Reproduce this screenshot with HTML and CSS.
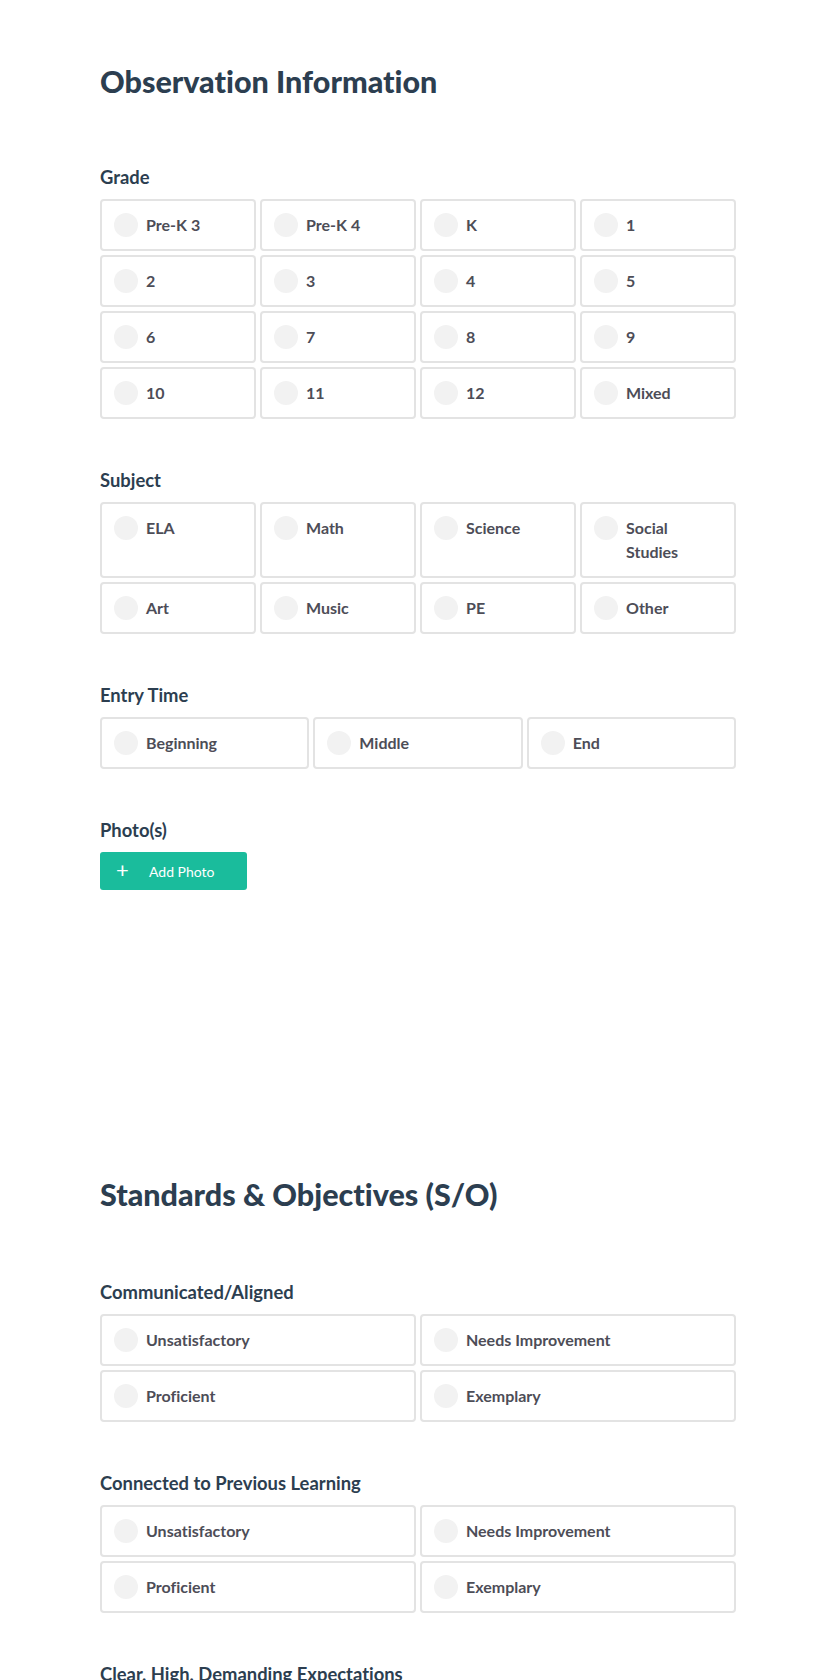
FILE: index.html
```html
<!DOCTYPE html>
<html>
<head>
<meta charset="utf-8">
<link rel="stylesheet" href="styles.css">
</head>
<body>
<main class="page">
  <section class="section">
    <h1 class="section-title">Observation Information</h1>

    <div class="field">
      <h2 class="field-label">Grade</h2>
      <div class="options cols-4">
        <label class="option"><span class="radio"></span><span class="option-text">Pre-K 3</span></label>
        <label class="option"><span class="radio"></span><span class="option-text">Pre-K 4</span></label>
        <label class="option"><span class="radio"></span><span class="option-text">K</span></label>
        <label class="option"><span class="radio"></span><span class="option-text">1</span></label>
        <label class="option"><span class="radio"></span><span class="option-text">2</span></label>
        <label class="option"><span class="radio"></span><span class="option-text">3</span></label>
        <label class="option"><span class="radio"></span><span class="option-text">4</span></label>
        <label class="option"><span class="radio"></span><span class="option-text">5</span></label>
        <label class="option"><span class="radio"></span><span class="option-text">6</span></label>
        <label class="option"><span class="radio"></span><span class="option-text">7</span></label>
        <label class="option"><span class="radio"></span><span class="option-text">8</span></label>
        <label class="option"><span class="radio"></span><span class="option-text">9</span></label>
        <label class="option"><span class="radio"></span><span class="option-text">10</span></label>
        <label class="option"><span class="radio"></span><span class="option-text">11</span></label>
        <label class="option"><span class="radio"></span><span class="option-text">12</span></label>
        <label class="option"><span class="radio"></span><span class="option-text">Mixed</span></label>
      </div>
    </div>

    <div class="field">
      <h2 class="field-label">Subject</h2>
      <div class="options cols-4">
        <label class="option"><span class="radio"></span><span class="option-text">ELA</span></label>
        <label class="option"><span class="radio"></span><span class="option-text">Math</span></label>
        <label class="option"><span class="radio"></span><span class="option-text">Science</span></label>
        <label class="option"><span class="radio"></span><span class="option-text">Social Studies</span></label>
        <label class="option"><span class="radio"></span><span class="option-text">Art</span></label>
        <label class="option"><span class="radio"></span><span class="option-text">Music</span></label>
        <label class="option"><span class="radio"></span><span class="option-text">PE</span></label>
        <label class="option"><span class="radio"></span><span class="option-text">Other</span></label>
      </div>
    </div>

    <div class="field">
      <h2 class="field-label">Entry Time</h2>
      <div class="options cols-3">
        <label class="option"><span class="radio"></span><span class="option-text">Beginning</span></label>
        <label class="option"><span class="radio"></span><span class="option-text">Middle</span></label>
        <label class="option"><span class="radio"></span><span class="option-text">End</span></label>
      </div>
    </div>

    <div class="field">
      <h2 class="field-label">Photo(s)</h2>
      <button class="add-btn" type="button"><span class="plus">+</span><span>Add Photo</span></button>
    </div>
  </section>

  <section class="section">
    <h1 class="section-title section-title-lg-gap">Standards &amp; Objectives (S/O)</h1>

    <div class="field">
      <h2 class="field-label">Communicated/Aligned</h2>
      <div class="options cols-2">
        <label class="option"><span class="radio"></span><span class="option-text">Unsatisfactory</span></label>
        <label class="option"><span class="radio"></span><span class="option-text">Needs Improvement</span></label>
        <label class="option"><span class="radio"></span><span class="option-text">Proficient</span></label>
        <label class="option"><span class="radio"></span><span class="option-text">Exemplary</span></label>
      </div>
    </div>

    <div class="field">
      <h2 class="field-label">Connected to Previous Learning</h2>
      <div class="options cols-2">
        <label class="option"><span class="radio"></span><span class="option-text">Unsatisfactory</span></label>
        <label class="option"><span class="radio"></span><span class="option-text">Needs Improvement</span></label>
        <label class="option"><span class="radio"></span><span class="option-text">Proficient</span></label>
        <label class="option"><span class="radio"></span><span class="option-text">Exemplary</span></label>
      </div>
    </div>

    <div class="field">
      <h2 class="field-label">Clear, High, Demanding Expectations</h2>
      <div class="options cols-2">
        <label class="option"><span class="radio"></span><span class="option-text">Unsatisfactory</span></label>
        <label class="option"><span class="radio"></span><span class="option-text">Needs Improvement</span></label>
        <label class="option"><span class="radio"></span><span class="option-text">Proficient</span></label>
        <label class="option"><span class="radio"></span><span class="option-text">Exemplary</span></label>
      </div>
    </div>
  </section>
</main>
</body>
</html>
```

FILE: styles.css
```css
* { box-sizing: border-box; }

html, body {
  margin: 0;
  padding: 0;
  background: #ffffff;
}

body {
  font-family: Lato, "Open Sans", "Liberation Sans", sans-serif;
  font-variant-ligatures: none;
  font-feature-settings: "liga" 0, "clig" 0, "dlig" 0;
  color: #2c3e50;
}

.page {
  width: 636px;
  margin-left: 100px;
  padding-top: 63px;
}

.section {
  padding-bottom: 286px;
}

.section-title {
  margin: 0 0 66px;
  font-size: 30.5px;
  line-height: 36px;
  font-weight: 900;
  color: #2c3e50;
}

.section-title-lg-gap {
  margin-bottom: 68px;
}

.field {
  margin-bottom: 49px;
}

.section .field:last-child {
  margin-bottom: 0;
}

.field-label {
  margin: 0 0 10px;
  font-size: 18.4px;
  line-height: 24px;
  font-weight: 700;
  color: #2c3e50;
}

.options {
  display: grid;
  gap: 4px;
}

.cols-4 { grid-template-columns: repeat(4, 1fr); }
.cols-3 { grid-template-columns: repeat(3, 1fr); }
.cols-2 { grid-template-columns: repeat(2, 1fr); }

.option {
  display: flex;
  align-items: flex-start;
  gap: 8px;
  padding: 12px 12px;
  border: 2px solid #e3e3e3;
  border-radius: 4px;
  background: #fff;
  cursor: pointer;
}

.radio {
  flex: none;
  width: 24px;
  height: 24px;
  border-radius: 50%;
  background: #f2f2f2;
}

.option-text {
  font-size: 16px;
  line-height: 24px;
  font-weight: 700;
  color: #4d4d57;
}

.add-btn {
  display: flex;
  align-items: center;
  width: 147px;
  height: 38px;
  padding: 0 0 0 16px;
  border: none;
  border-radius: 3px;
  background: #1abc9c;
  color: #fff;
  font-family: Lato, "Open Sans", sans-serif;
  font-size: 14px;
  font-weight: 400;
  cursor: pointer;
}

.plus {
  width: 33px;
  font-size: 22px;
  font-weight: 400;
  line-height: 1;
  text-align: left;
  margin-top: -2px;
}
```
